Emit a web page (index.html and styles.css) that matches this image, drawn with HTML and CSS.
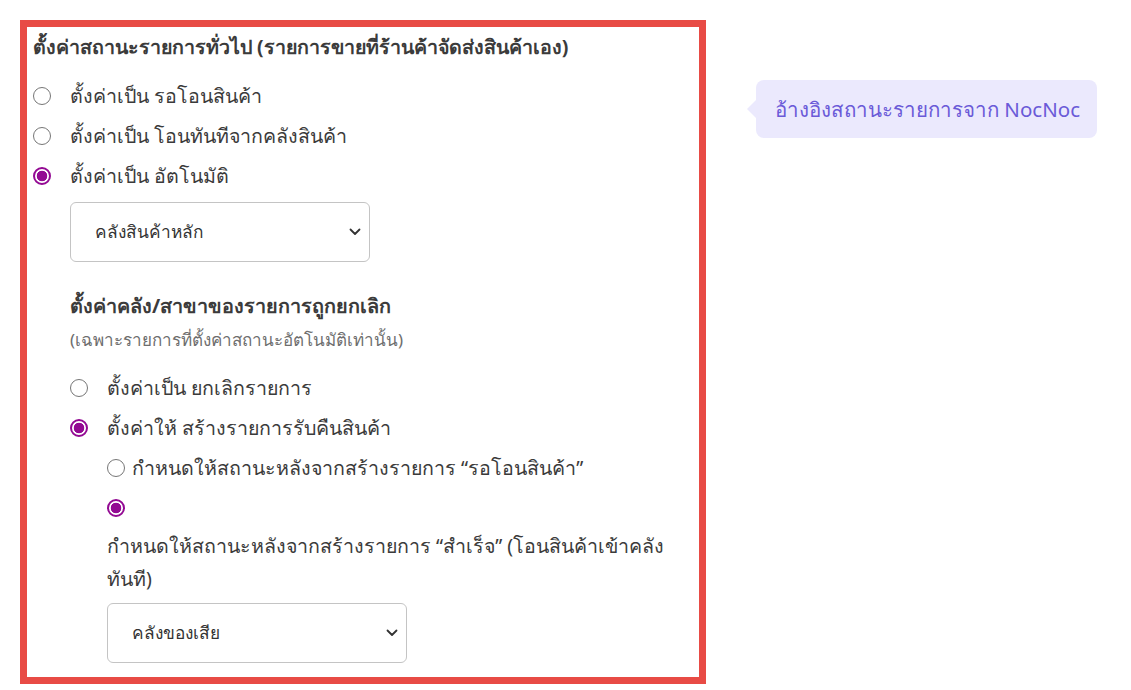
FILE: index.html
```html
<!DOCTYPE html>
<html lang="th">
<head>
<meta charset="utf-8">
<link rel="stylesheet" href="styles.css">
</head>
<body>
<div class="page">
  <div class="panel">
    <h3 class="title">ตั้งค่าสถานะรายการทั่วไป (รายการขายที่ร้านค้าจัดส่งสินค้าเอง)</h3>
    <label class="row"><input type="radio" name="g1"><span>ตั้งค่าเป็น รอโอนสินค้า</span></label>
    <label class="row"><input type="radio" name="g1"><span>ตั้งค่าเป็น โอนทันทีจากคลังสินค้า</span></label>
    <label class="row"><input type="radio" name="g1" checked><span>ตั้งค่าเป็น อัตโนมัติ</span></label>
    <div class="indent">
      <div class="select first"><span>คลังสินค้าหลัก</span><svg class="chev" viewBox="0 0 12 8" width="12" height="8"><path d="M1.5 1.5 6 6l4.5-4.5" fill="none" stroke="#333" stroke-width="1.8" stroke-linecap="round" stroke-linejoin="round"/></svg></div>
      <h4 class="sub">ตั้งค่าคลัง/สาขาของรายการถูกยกเลิก</h4>
      <p class="note">(เฉพาะรายการที่ตั้งค่าสถานะอัตโนมัติเท่านั้น)</p>
      <label class="row"><input type="radio" name="g2"><span>ตั้งค่าเป็น ยกเลิกรายการ</span></label>
      <label class="row"><input type="radio" name="g2" checked><span>ตั้งค่าให้ สร้างรายการรับคืนสินค้า</span></label>
      <div class="indent">
        <label class="row tight"><input type="radio" name="g3"><span>กำหนดให้สถานะหลังจากสร้างรายการ “รอโอนสินค้า”</span></label>
        <label class="row tight"><input type="radio" name="g3" checked></label>
        <p class="wrap">กำหนดให้สถานะหลังจากสร้างรายการ “สำเร็จ” (โอนสินค้าเข้าคลัง ทันที)</p>
        <div class="select second"><span>คลังของเสีย</span><svg class="chev" viewBox="0 0 12 8" width="12" height="8"><path d="M1.5 1.5 6 6l4.5-4.5" fill="none" stroke="#333" stroke-width="1.8" stroke-linecap="round" stroke-linejoin="round"/></svg></div>
      </div>
    </div>
  </div>
  <div class="tip">อ้างอิงสถานะรายการจาก NocNoc</div>
</div>
</body>
</html>
```
FILE: styles.css
```css
html, body {
  margin: 0;
  padding: 0;
  background: #ffffff;
}
body {
  font-family: "Noto Sans", "Liberation Sans", sans-serif;
  color: #3b3b3b;
}
.page {
  display: flex;
  align-items: flex-start;
  padding: 20px;
}
.panel {
  width: 666px;
  border: 7px solid #e84b45;
  padding: 0 0 14px 6px;
}
.title {
  margin: 0;
  font-size: 19.6px;
  font-weight: 700;
  line-height: 40px;
  color: #3b3b3b;
}
.row {
  display: flex;
  align-items: center;
  height: 40px;
  font-size: 19.6px;
}
.title + .row {
  margin-top: 9px;
}
.row input {
  appearance: none;
  -webkit-appearance: none;
  width: 18px;
  height: 18px;
  margin: 0 19px 0 0;
  border: 1.5px solid #767676;
  border-radius: 50%;
  background: #fff;
  flex: none;
}
.row input:checked {
  border: 2px solid #930a93;
  background: radial-gradient(circle, #930a93 0 5px, #fff 5.6px);
}
.row.tight input {
  margin-right: 7px;
}
.indent {
  margin-left: 37px;
}
.select {
  display: flex;
  align-items: center;
  justify-content: space-between;
  box-sizing: border-box;
  width: 300px;
  height: 60px;
  border: 1px solid #c4c4c4;
  border-radius: 6px;
  padding: 0 8px 0 24px;
  font-size: 17.3px;
  color: #333;
}
.select.first {
  margin-top: 6px;
}
.select.second {
  margin-top: 8px;
}
.sub {
  margin: 29px 0 0;
  font-size: 19.8px;
  font-weight: 700;
  line-height: 30px;
}
.note {
  margin: 7px 0 16px;
  font-size: 17px;
  line-height: 24px;
  color: #6e6e6e;
}
.wrap {
  margin: 1px 0 0;
  width: 580px;
  font-size: 19.6px;
  line-height: 33px;
}
.tip {
  position: relative;
  margin: 60px 0 0 50px;
  background: #ebe9fd;
  color: #6a5ad8;
  border-radius: 8px;
  padding: 0 17px 0 19px;
  height: 58px;
  display: flex;
  align-items: center;
  font-size: 20.5px;
  white-space: nowrap;
}
.tip::before {
  content: "";
  position: absolute;
  left: -9px;
  top: 50%;
  margin-top: -9px;
  border-style: solid;
  border-width: 9px 9px 9px 0;
  border-color: transparent #ebe9fd transparent transparent;
}
```
